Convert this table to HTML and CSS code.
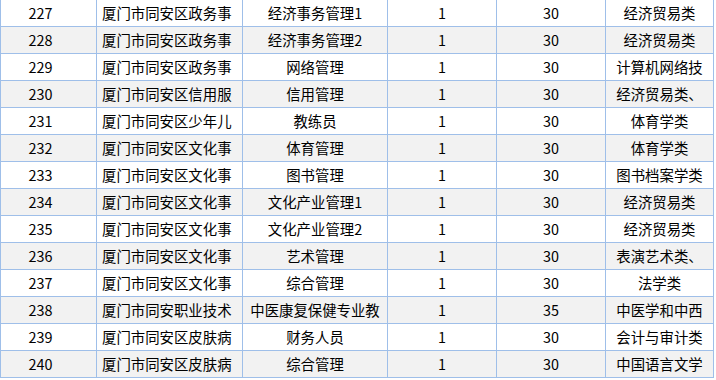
FILE: index.html
```html
<!DOCTYPE html>
<html lang="zh-CN">
<head>
<meta charset="utf-8">
<link rel="stylesheet" href="styles.css">
</head>
<body>
<div class="sheet">
  <div class="row"><div class="c num">227</div><div class="c org">厦门市同安区政务事</div><div class="c ctr">经济事务管理1</div><div class="c ctr">1</div><div class="c ctr">30</div><div class="c ctr">经济贸易类</div></div>
  <div class="row alt"><div class="c num">228</div><div class="c org">厦门市同安区政务事</div><div class="c ctr">经济事务管理2</div><div class="c ctr">1</div><div class="c ctr">30</div><div class="c ctr">经济贸易类</div></div>
  <div class="row"><div class="c num">229</div><div class="c org">厦门市同安区政务事</div><div class="c ctr">网络管理</div><div class="c ctr">1</div><div class="c ctr">30</div><div class="c ctr">计算机网络技</div></div>
  <div class="row alt"><div class="c num">230</div><div class="c org">厦门市同安区信用服</div><div class="c ctr">信用管理</div><div class="c ctr">1</div><div class="c ctr">30</div><div class="c ctr">经济贸易类、</div></div>
  <div class="row"><div class="c num">231</div><div class="c org">厦门市同安区少年儿</div><div class="c ctr">教练员</div><div class="c ctr">1</div><div class="c ctr">30</div><div class="c ctr">体育学类</div></div>
  <div class="row alt"><div class="c num">232</div><div class="c org">厦门市同安区文化事</div><div class="c ctr">体育管理</div><div class="c ctr">1</div><div class="c ctr">30</div><div class="c ctr">体育学类</div></div>
  <div class="row"><div class="c num">233</div><div class="c org">厦门市同安区文化事</div><div class="c ctr">图书管理</div><div class="c ctr">1</div><div class="c ctr">30</div><div class="c ctr">图书档案学类</div></div>
  <div class="row alt"><div class="c num">234</div><div class="c org">厦门市同安区文化事</div><div class="c ctr">文化产业管理1</div><div class="c ctr">1</div><div class="c ctr">30</div><div class="c ctr">经济贸易类</div></div>
  <div class="row"><div class="c num">235</div><div class="c org">厦门市同安区文化事</div><div class="c ctr">文化产业管理2</div><div class="c ctr">1</div><div class="c ctr">30</div><div class="c ctr">经济贸易类</div></div>
  <div class="row alt"><div class="c num">236</div><div class="c org">厦门市同安区文化事</div><div class="c ctr">艺术管理</div><div class="c ctr">1</div><div class="c ctr">30</div><div class="c ctr">表演艺术类、</div></div>
  <div class="row"><div class="c num">237</div><div class="c org">厦门市同安区文化事</div><div class="c ctr">综合管理</div><div class="c ctr">1</div><div class="c ctr">30</div><div class="c ctr">法学类</div></div>
  <div class="row alt"><div class="c num">238</div><div class="c org">厦门市同安职业技术</div><div class="c ctr">中医康复保健专业教</div><div class="c ctr">1</div><div class="c ctr">35</div><div class="c ctr">中医学和中西</div></div>
  <div class="row"><div class="c num">239</div><div class="c org">厦门市同安区皮肤病</div><div class="c ctr">财务人员</div><div class="c ctr">1</div><div class="c ctr">30</div><div class="c ctr">会计与审计类</div></div>
  <div class="row alt"><div class="c num">240</div><div class="c org">厦门市同安区皮肤病</div><div class="c ctr">综合管理</div><div class="c ctr">1</div><div class="c ctr">30</div><div class="c ctr">中国语言文学</div></div>
</div>
</body>
</html>
```

FILE: styles.css
```css
html, body {
  margin: 0;
  padding: 0;
  background: #ffffff;
}

body {
  font-family: "Noto Sans CJK SC", "Liberation Sans", sans-serif;
  font-size: 14.4px;
  color: #000;
}

.sheet {
  display: flex;
  flex-direction: column;
  width: 714px;
}

.row {
  display: grid;
  grid-template-columns: 97px 146px 145px 109px 109px 108px;
  height: 27px;
  background: #ffffff;
}

.row.alt {
  background: #f2f2f2;
}

.c {
  box-sizing: border-box;
  height: 27px;
  border-right: 1px solid #9fbfe9;
  border-bottom: 1px solid #9fbfe9;
  display: flex;
  align-items: center;
  white-space: nowrap;
  overflow: hidden;
  line-height: 1;
}

.num {
  border-left: 1px solid #9fbfe9;
  justify-content: center;
  padding-right: 16px;
}

.org {
  justify-content: flex-start;
  padding-left: 5px;
}

.ctr {
  justify-content: center;
}
```
